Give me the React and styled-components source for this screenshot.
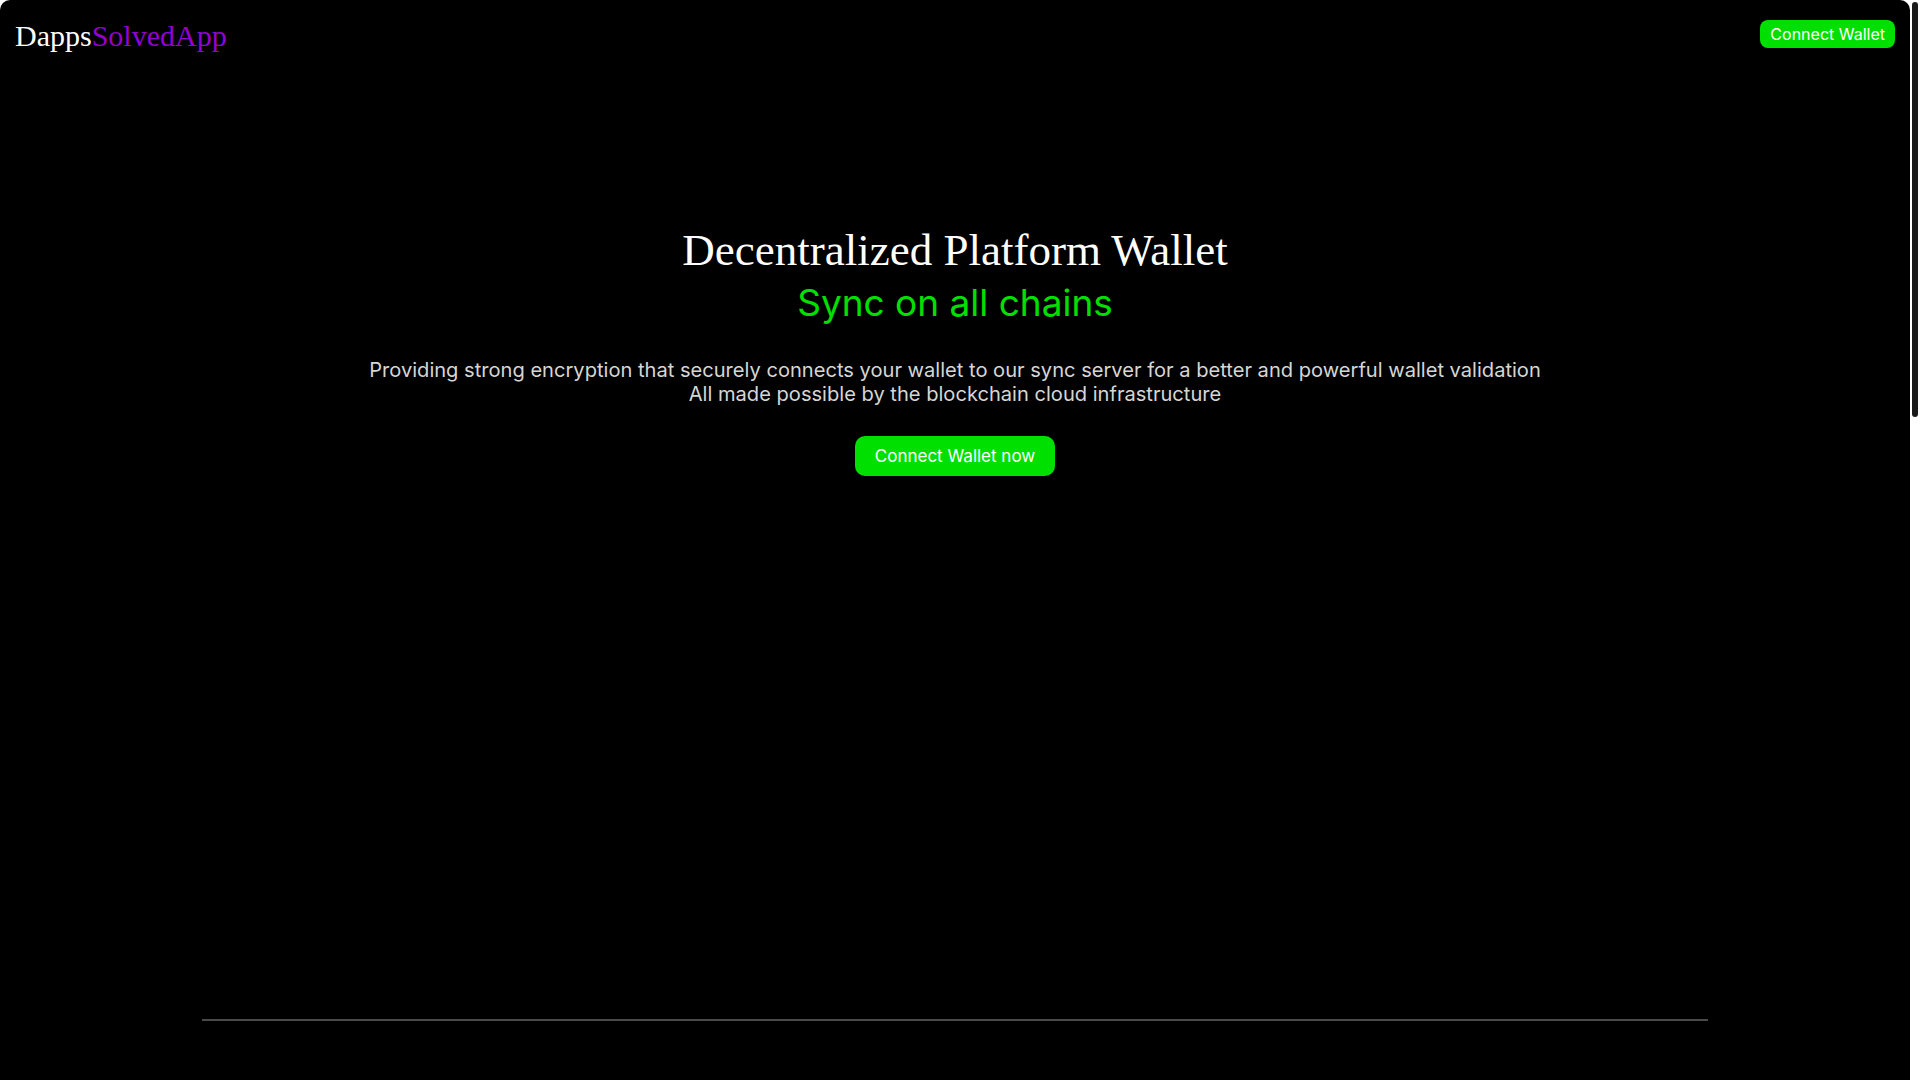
import styled, { createGlobalStyle } from "styled-components";

const GlobalStyle = createGlobalStyle`
  html {
    background: #ffffff;
  }
  body {
    margin: 0;
    font-family: "Inter", "Liberation Sans", sans-serif;
  }
`;

const Shell = styled.div`
  display: flex;
  min-height: 100vh;
  background: #ffffff;
`;

const Page = styled.div`
  flex: 1;
  background: #000000;
  border-radius: 10px 10px 0 0;
  display: flex;
  flex-direction: column;
`;

/* fake scrollbar rail, the reference page is scrolled to top */
const Rail = styled.div`
  width: 10px;
  flex-shrink: 0;
  padding: 2px 2px;
  box-sizing: border-box;
`;

const Thumb = styled.div`
  width: 6px;
  height: 415px;
  border-radius: 4px;
  background: #1a1a1a;
`;

const Header = styled.header`
  display: flex;
  justify-content: space-between;
  align-items: flex-start;
  padding: 20px 15px;
`;

const Logo = styled.div`
  font-family: "Liberation Serif", "Times New Roman", serif;
  font-size: 30px;
  line-height: 1;
  margin-top: 1px;
  color: #ffffff;
`;

const LogoAccent = styled.span`
  color: #9400d3;
`;

const GreenButton = styled.button`
  font-family: "Inter", "Liberation Sans", sans-serif;
  background: #00e000;
  color: #ffffff;
  border: none;
  cursor: pointer;
  font-size: ${(p) => (p.$big ? "17px" : "16px")};
  height: ${(p) => (p.$big ? "40px" : "28px")};
  padding: ${(p) => (p.$big ? "0 20px" : "0 10px")};
  border-radius: ${(p) => (p.$big ? "10px" : "8px")};
`;

const Hero = styled.section`
  display: flex;
  flex-direction: column;
  align-items: center;
  text-align: center;
  padding-top: 154px;
`;

const Title = styled.h1`
  margin: 0;
  font-family: "Liberation Serif", "Times New Roman", serif;
  font-weight: 400;
  font-size: 45px;
  line-height: 1.15;
  color: #ffffff;
`;

const Subtitle = styled.h2`
  margin: 3px 0 0;
  font-weight: 400;
  font-size: 37px;
  line-height: 45px;
  color: #00e000;
`;

const Lead = styled.p`
  margin: 33px 0 30px;
  font-size: 20.1px;
  line-height: 24px;
  color: #d6d6d6;
`;

const Footer = styled.footer`
  width: 1506px;
  margin: 543px auto 0;
  border-top: 2px solid #4a4a4a;
`;

export default function App() {
  return (
    <>
      <GlobalStyle />
      <Shell>
        <Page>
          <Header>
            <Logo>
              Dapps<LogoAccent>SolvedApp</LogoAccent>
            </Logo>
            <GreenButton>Connect Wallet</GreenButton>
          </Header>
          <Hero>
            <Title>Decentralized Platform Wallet</Title>
            <Subtitle>Sync on all chains</Subtitle>
            <Lead>
              Providing strong encryption that securely connects your wallet to our sync server for a better and powerful wallet validation
              <br />
              All made possible by the blockchain cloud infrastructure
            </Lead>
            <GreenButton $big>Connect Wallet now</GreenButton>
          </Hero>
          <Footer />
        </Page>
        <Rail>
          <Thumb />
        </Rail>
      </Shell>
    </>
  );
}
